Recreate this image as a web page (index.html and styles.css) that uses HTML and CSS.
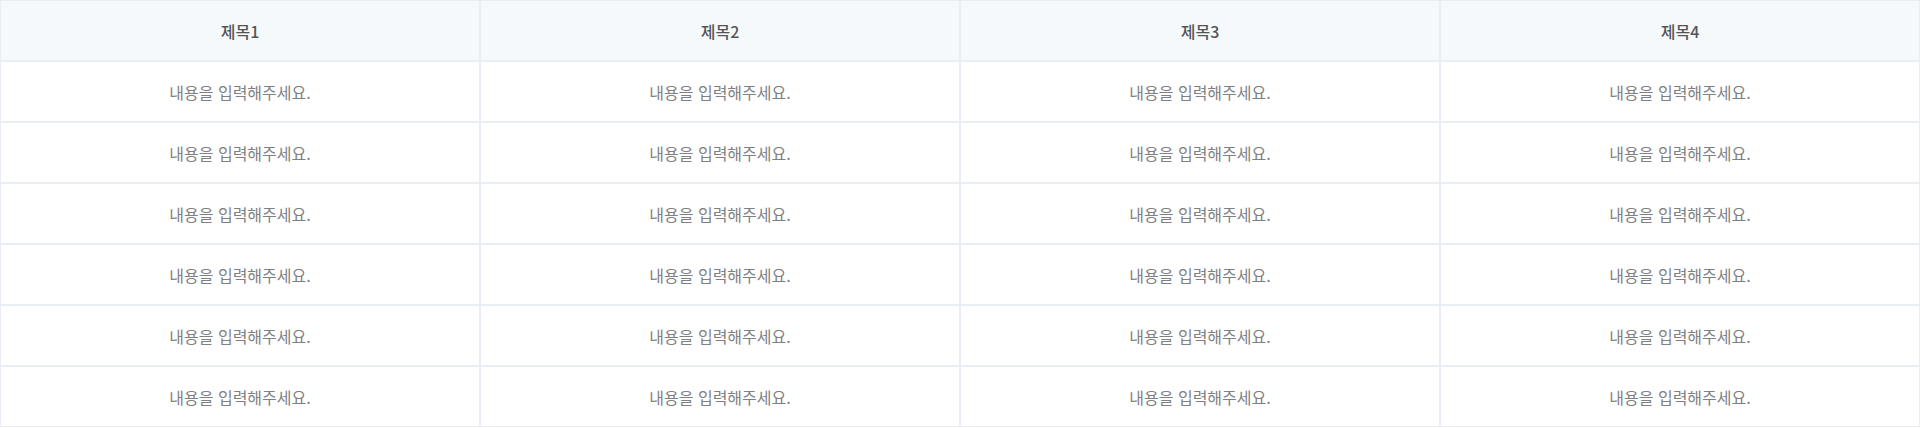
FILE: index.html
```html
<!DOCTYPE html>
<html lang="ko">
<head>
    <meta charset="UTF-8">
    <meta name="viewport" content="width=device-width, initial-scale=1.0">
    <title>테이블</title>
    <link rel="stylesheet" href="styles.css">
</head>
<body>
    <table class="data-table">
        <thead>
            <tr>
                <th>제목1</th>
                <th>제목2</th>
                <th>제목3</th>
                <th>제목4</th>
            </tr>
        </thead>
        <tbody>
            <tr><td>내용을 입력해주세요.</td><td>내용을 입력해주세요.</td><td>내용을 입력해주세요.</td><td>내용을 입력해주세요.</td></tr>
            <tr><td>내용을 입력해주세요.</td><td>내용을 입력해주세요.</td><td>내용을 입력해주세요.</td><td>내용을 입력해주세요.</td></tr>
            <tr><td>내용을 입력해주세요.</td><td>내용을 입력해주세요.</td><td>내용을 입력해주세요.</td><td>내용을 입력해주세요.</td></tr>
            <tr><td>내용을 입력해주세요.</td><td>내용을 입력해주세요.</td><td>내용을 입력해주세요.</td><td>내용을 입력해주세요.</td></tr>
            <tr><td>내용을 입력해주세요.</td><td>내용을 입력해주세요.</td><td>내용을 입력해주세요.</td><td>내용을 입력해주세요.</td></tr>
            <tr><td>내용을 입력해주세요.</td><td>내용을 입력해주세요.</td><td>내용을 입력해주세요.</td><td>내용을 입력해주세요.</td></tr>
        </tbody>
    </table>
</body>
</html>
```

FILE: styles.css
```css
body {
    margin: 0;
    background-color: #ffffff;
    font-family: "Noto Sans CJK KR", "Noto Sans", sans-serif;
}

.data-table {
    width: 100%;
    border-collapse: separate;
    border-spacing: 0;
    table-layout: fixed;
}

.data-table th,
.data-table td {
    height: 58px;
    padding: 1px 0 0;
    border: 1px solid #e9eef6;
    text-align: center;
    vertical-align: middle;
    box-sizing: content-box;
}

.data-table th {
    background-color: #f6f9fb;
    color: #555555;
    font-size: 16px;
    font-weight: 500;
}

.data-table td {
    color: #808080;
    font-size: 16px;
    font-weight: 400;
}
```
